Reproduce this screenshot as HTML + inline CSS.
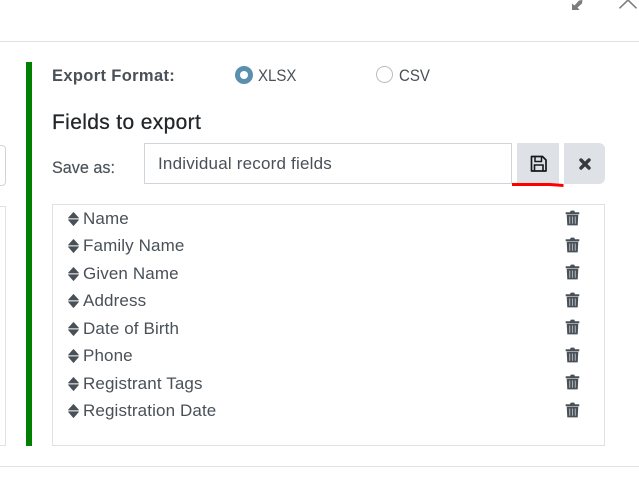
<!DOCTYPE html>
<html>
<head>
<meta charset="utf-8">
<style>
html,body{margin:0;padding:0;background:#fff;}
body{width:639px;height:496px;position:relative;overflow:hidden;font-family:"Liberation Sans",sans-serif;color:#495057;font-size:16px;}
.a{position:absolute;}
.t{position:absolute;white-space:nowrap;line-height:20px;}
.row{position:absolute;left:83px;white-space:nowrap;line-height:20px;font-size:17px;letter-spacing:.12px;color:#495057;}
.s{position:absolute;left:67.500px;}
.tr{position:absolute;left:565px;}
</style>
</head>
<body>
<!-- header -->
<svg class="a" style="left:570px;top:0" width="69" height="12" viewBox="0 0 69 12">
<path d="M2 10V3.500L4.500 5.500 9 .5 12.500 0 12 3.500 7.500 7.500 9.500 10Z" fill="#7c7c7c"/>
<path d="M49.500 8.300L58 0 66.500 8.300" fill="none" stroke="#808080" stroke-width="1.600"/>
</svg>
<div class="a" style="left:0;top:41px;width:639px;height:1px;background:#dee2e6"></div>
<div class="a" style="left:0;top:466px;width:639px;height:1px;background:#dee2e6"></div>

<!-- left column remnants -->
<div class="a" style="left:-10px;top:145px;width:14px;height:39px;border:1px solid #ced4da;border-radius:4px"></div>
<div class="a" style="left:-10px;top:206px;width:14px;height:238px;border:1px solid #dee2e6"></div>

<!-- green bar -->
<div class="a" style="left:26px;top:62px;width:6px;height:384px;background:#008000"></div>

<!-- format -->
<div class="t" style="left:52px;top:66px;font-weight:bold;font-size:16.500px;letter-spacing:.35px">Export Format:</div>
<div class="a" style="left:235px;top:66px;width:18px;height:18px;border-radius:50%;background:#5b8fae"></div>
<div class="a" style="left:240px;top:71px;width:8px;height:8px;border-radius:50%;background:#fff"></div>
<div class="t" style="left:258px;top:66px;font-size:17px;transform:scaleX(.885);transform-origin:0 0">XLSX</div>
<div class="a" style="left:376px;top:66px;width:15px;height:15px;border-radius:50%;border:1px solid #bdbdbd;background:#fff"></div>
<div class="t" style="left:399px;top:66px;font-size:17px;transform:scaleX(.885);transform-origin:0 0">CSV</div>

<!-- title -->
<div class="t" style="left:52px;top:113px;font-size:21px;color:#212529;letter-spacing:.35px;-webkit-text-stroke:.25px #212529">Fields to export</div>

<!-- save as -->
<div class="t" style="left:52px;top:158px;font-size:16.200px;-webkit-text-stroke:.15px #495057">Save as:</div>
<div class="a" style="left:144px;top:143px;width:366px;height:39px;border:1px solid #ced4da;background:#fff"></div>
<div class="t" style="left:158px;top:154px;font-size:17px;letter-spacing:.2px">Individual record fields</div>
<div class="a" style="left:517px;top:143px;width:42px;height:41px;background:#dee2e6"></div>
<div class="a" style="left:564px;top:143px;width:41px;height:41px;background:#dee2e6;border-radius:0 6px 6px 0"></div>
<svg class="a" style="left:530px;top:155px" width="18" height="18" viewBox="0 0 18 18">
<path d="M1.500 1.500H12.500L16 5V16H1.500Z" fill="none" stroke="#16191c" stroke-width="1.700" stroke-linejoin="round"/>
<path d="M5 2V6.500H11.500V2" fill="none" stroke="#16191c" stroke-width="1.500"/>
<path d="M4.500 16V10H13V16" fill="none" stroke="#16191c" stroke-width="1.600"/>
</svg>
<svg class="a" style="left:578px;top:157px" width="14" height="14" viewBox="0 0 14 14">
<path d="M3 3L11 11M11 3L3 11" stroke="#343a40" stroke-width="3.400" stroke-linecap="round"/>
</svg>
<svg class="a" style="left:510px;top:181px" width="56" height="8" viewBox="0 0 56 8">
<path d="M2 2H40L53.500 3V6L40 5H2Z" fill="#f00"/>
</svg>

<!-- list -->
<div class="a" style="left:52px;top:204px;width:551px;height:240px;border:1px solid #dee2e6"></div>

<svg width="0" height="0" style="position:absolute">
<defs>
<symbol id="sort" viewBox="0 0 11 14"><path d="M.6 5.900L5.500 .6 10.400 5.900ZM.6 7.800H10.400L5.500 13.400Z" fill="#495057" stroke="#495057" stroke-width=".9" stroke-linejoin="round"/></symbol>
<symbol id="trash" viewBox="0 0 15 16"><path d="M.7 2.300H5L5.800 .6H9.200L10 2.300H14.300V4.200H.7Z" fill="#495057"/><path d="M1.700 4.800H13.300L12.700 15.400H2.300Z" fill="#495057"/><path d="M4.700 6.500V13.700M7.500 6.500V13.700M10.300 6.500V13.700" stroke="#a9aeb3" stroke-width="1.100"/></symbol>
</defs>
</svg>

<svg class="s" style="top:212px" width="11" height="14"><use href="#sort"/></svg><div class="row" style="top:209px">Name</div>
<svg class="s" style="top:239px" width="11" height="14"><use href="#sort"/></svg><div class="row" style="top:236px">Family Name</div>
<svg class="s" style="top:267px" width="11" height="14"><use href="#sort"/></svg><div class="row" style="top:264px">Given Name</div>
<svg class="s" style="top:294px" width="11" height="14"><use href="#sort"/></svg><div class="row" style="top:291px">Address</div>
<svg class="s" style="top:322px" width="11" height="14"><use href="#sort"/></svg><div class="row" style="top:319px">Date of Birth</div>
<svg class="s" style="top:349px" width="11" height="14"><use href="#sort"/></svg><div class="row" style="top:346px">Phone</div>
<svg class="s" style="top:377px" width="11" height="14"><use href="#sort"/></svg><div class="row" style="top:374px">Registrant Tags</div>
<svg class="s" style="top:404px" width="11" height="14"><use href="#sort"/></svg><div class="row" style="top:401px">Registration Date</div>

<svg class="tr" style="top:210px" width="15" height="16"><use href="#trash"/></svg>
<svg class="tr" style="top:237px" width="15" height="16"><use href="#trash"/></svg>
<svg class="tr" style="top:264px" width="15" height="16"><use href="#trash"/></svg>
<svg class="tr" style="top:292px" width="15" height="16"><use href="#trash"/></svg>
<svg class="tr" style="top:319px" width="15" height="16"><use href="#trash"/></svg>
<svg class="tr" style="top:347px" width="15" height="16"><use href="#trash"/></svg>
<svg class="tr" style="top:374px" width="15" height="16"><use href="#trash"/></svg>
<svg class="tr" style="top:402px" width="15" height="16"><use href="#trash"/></svg>
</body>
</html>
